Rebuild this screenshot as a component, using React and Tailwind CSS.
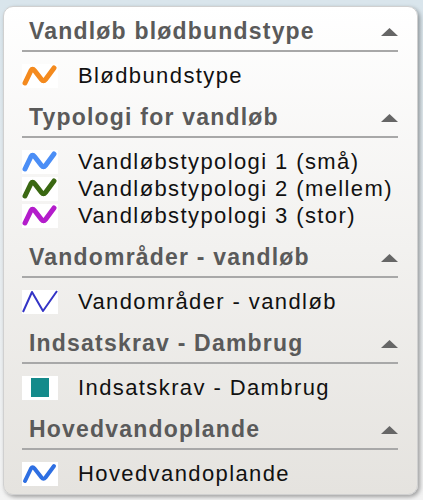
import React from 'react';

const font = { fontFamily: '"Liberation Sans", Arial, sans-serif' };

const Zig = ({ color, width = 5 }) => (
  <svg width="36" height="24" viewBox="0 0 36 24" className="bg-white">
    <path
      d="M3 19 L9 6.5 Q10.5 4 12.5 6.5 L19.5 15.5 Q21.5 18 23.5 15.5 L32 4"
      fill="none"
      stroke={color}
      strokeWidth={width}
      strokeLinecap="round"
      strokeLinejoin="round"
    />
  </svg>
);

const ThinZig = ({ color }) => (
  <svg width="36" height="24" viewBox="0 0 36 24" className="bg-white">
    <polyline points="1,22 10,2 21,21 35,1" fill="none" stroke={color} strokeWidth="2" strokeLinejoin="round" />
  </svg>
);

const Square = ({ color }) => (
  <div className="w-[36px] h-[24px] bg-white flex items-center justify-center">
    <div className="w-[18px] h-[19px]" style={{ background: color }} />
  </div>
);

const sections = [
  {
    title: 'Vandløb blødbundstype',
    items: [{ label: 'Blødbundstype', icon: <Zig color="#f48a1e" /> }],
  },
  {
    title: 'Typologi for vandløb',
    items: [
      { label: 'Vandløbstypologi 1 (små)', icon: <Zig color="#4b8ef6" /> },
      { label: 'Vandløbstypologi 2 (mellem)', icon: <Zig color="#3a6812" /> },
      { label: 'Vandløbstypologi 3 (stor)', icon: <Zig color="#b31ccb" /> },
    ],
  },
  {
    title: 'Vandområder - vandløb',
    items: [{ label: 'Vandområder - vandløb', icon: <ThinZig color="#3434c6" /> }],
  },
  {
    title: 'Indsatskrav - Dambrug',
    items: [{ label: 'Indsatskrav - Dambrug', icon: <Square color="#148a8a" /> }],
  },
  {
    title: 'Hovedvandoplande',
    items: [{ label: 'Hovedvandoplande', icon: <Zig color="#2e6fe2" width={4} /> }],
  },
];

export default function App() {
  return (
    <div className="w-[423px] h-[500px] bg-gradient-to-b from-[#d9e5ec] to-[#f3f3f3] pt-[6px] pl-[3px]" style={font}>
      <div className="w-[415px] rounded-[10px] border border-[#d0d0d0] bg-gradient-to-b from-[#ffffff] to-[#e5e3df] shadow-[2px_2px_4px_rgba(0,0,0,0.35)] pt-[11px] pb-[7px] pl-[18px] pr-[19px]">
        {sections.map((s, i) => (
          <div key={s.title} className={i > 0 ? 'mt-[15px]' : ''}>
            <div className="flex items-center justify-between border-b-2 border-[#a8a8a8] pb-[5px] pl-[7px]">
              <span className="text-[23px] leading-[27px] font-bold text-[#5a5a5a] tracking-[1.2px]">{s.title}</span>
              <svg width="17" height="8" viewBox="0 0 17 8">
                <polygon points="0,8 8.5,0 17,8" fill="#666666" />
              </svg>
            </div>
            <div className="mt-[10px]">
              {s.items.map((it) => (
                <div key={it.label} className="flex items-center h-[27px]">
                  {it.icon}
                  <span className="ml-[20px] text-[22px] leading-[27px] text-[#111111] tracking-[1.4px]">{it.label}</span>
                </div>
              ))}
            </div>
          </div>
        ))}
      </div>
    </div>
  );
}
